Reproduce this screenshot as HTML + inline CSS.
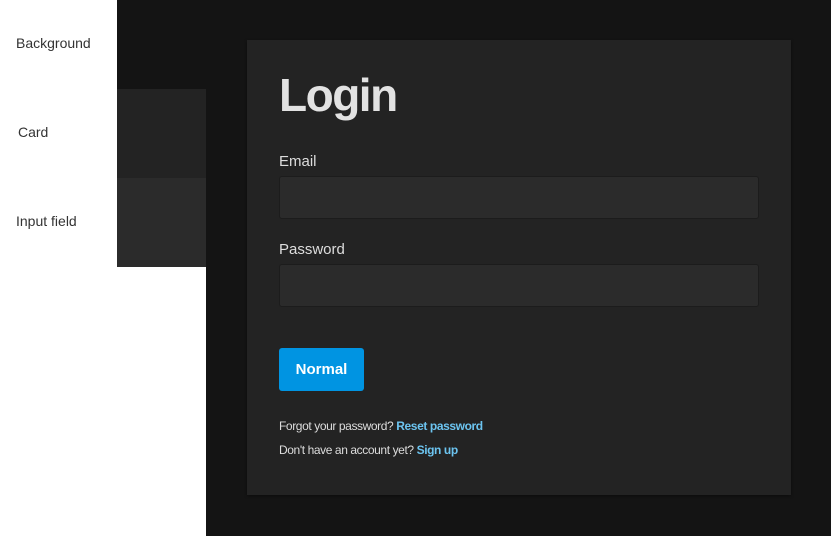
<!DOCTYPE html>
<html><head><style>
*{margin:0;padding:0;box-sizing:border-box}
body{width:831px;height:536px;background:#fff;position:relative;overflow:hidden;font-family:"Liberation Sans",sans-serif}
.a{position:absolute}
.lbl{position:absolute;left:16px;font-size:14px;color:#333}
.in{position:absolute;left:279px;width:480px;height:43px;background:#2b2b2b;border:1px solid #1c1c1c;border-radius:3px}
.fl{position:absolute;left:279px;font-size:15px;color:#ddd}
.t{position:absolute;left:279px;font-size:12px;color:#ddd;letter-spacing:-0.4px}
.t b{color:#6cc4f0;font-weight:bold}
</style></head><body>
<div class="a" style="left:117px;top:0;width:714px;height:536px;background:#141414"></div>
<div class="a" style="left:0;top:267px;width:206px;height:269px;background:#fff"></div>
<div class="a" style="left:117px;top:89px;width:89px;height:89px;background:#232323"></div>
<div class="a" style="left:117px;top:178px;width:89px;height:89px;background:#2b2b2b"></div>
<div class="lbl" style="top:35px">Background</div>
<div class="lbl" style="left:18px;top:124px">Card</div>
<div class="lbl" style="top:213px">Input field</div>
<div class="a" style="left:247px;top:40px;width:544px;height:455px;background:#232323;box-shadow:0 1px 3px rgba(0,0,0,.4)"></div>
<div class="a" style="left:279px;top:68px;font-size:46px;font-weight:bold;color:#e2e2e2;letter-spacing:-1.5px">Login</div>
<div class="fl" style="top:153px">Email</div>
<div class="in" style="top:176px"></div>
<div class="fl" style="top:241px">Password</div>
<div class="in" style="top:264px"></div>
<div class="a" style="left:279px;top:348px;width:85px;height:43px;background:#0094e2;border-radius:3px;color:#fff;font-size:15px;font-weight:bold;text-align:center;line-height:43px">Normal</div>
<div class="t" style="top:419px">Forgot your password? <b>Reset password</b></div>
<div class="t" style="top:443px">Don't have an account yet? <b>Sign up</b></div>
</body></html>
